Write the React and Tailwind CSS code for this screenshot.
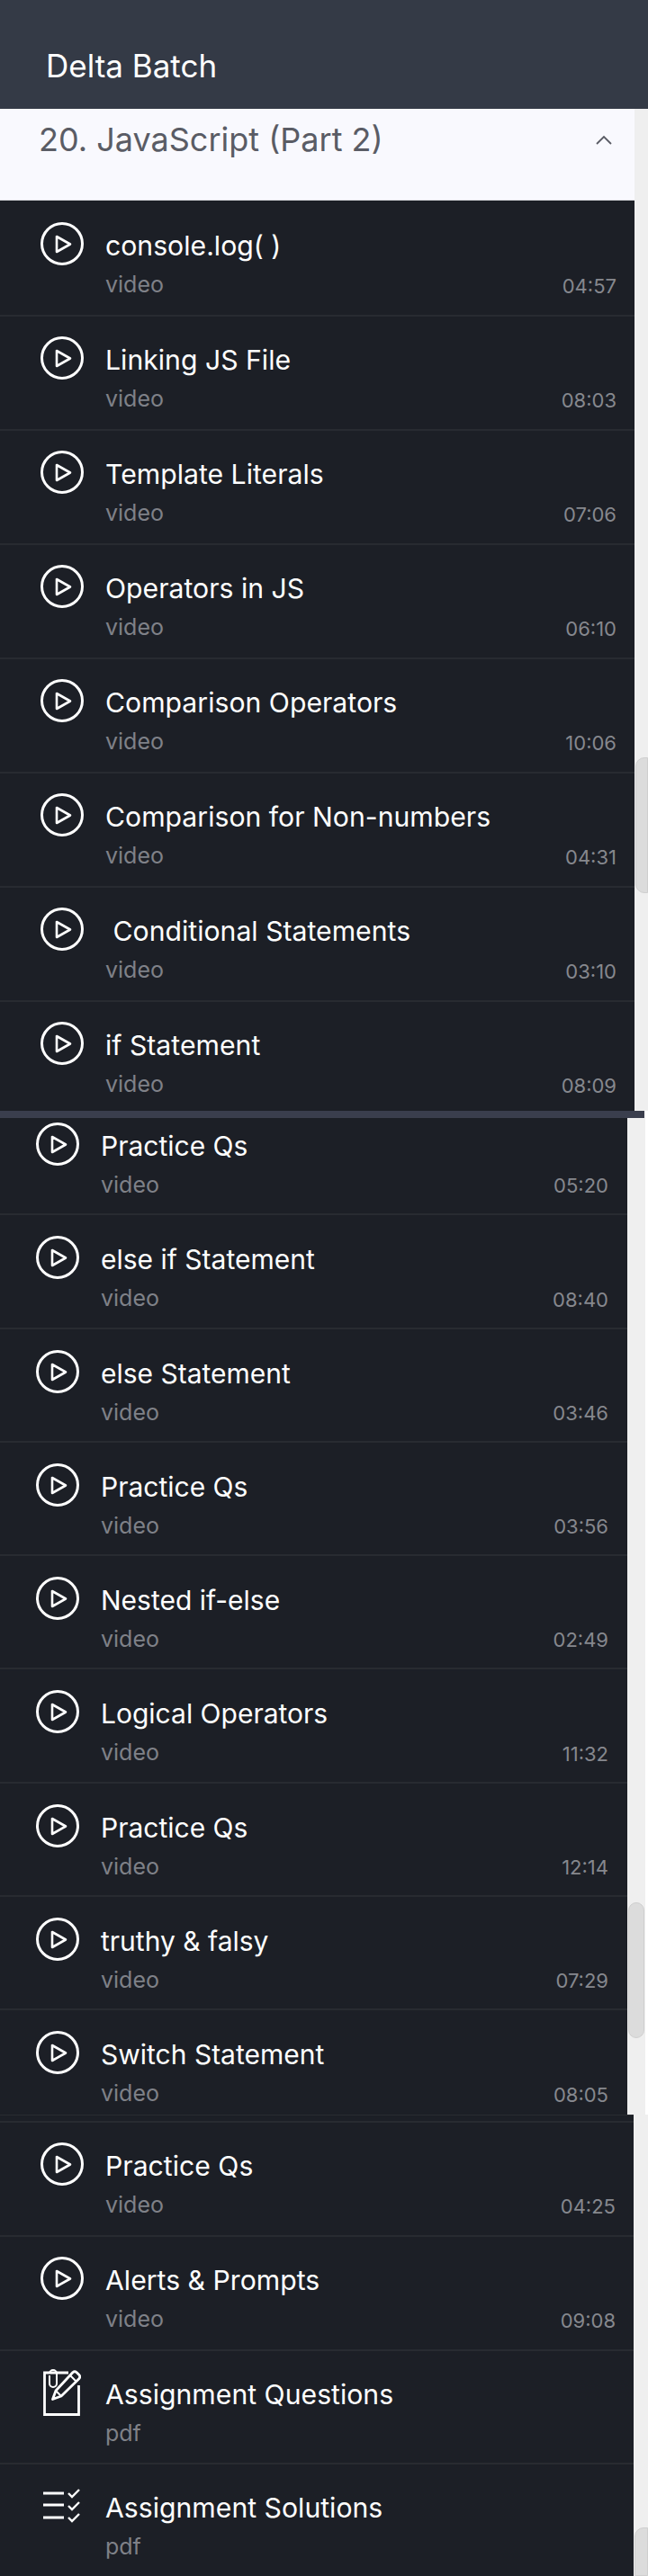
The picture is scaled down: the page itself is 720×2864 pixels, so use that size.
import React from "react";

const firstRows = [
  ["console.log( )", "04:57"],
  ["Linking JS File", "08:03"],
  ["Template Literals", "07:06"],
  ["Operators in JS", "06:10"],
  ["Comparison Operators", "10:06"],
  ["Comparison for Non-numbers", "04:31"],
  [" Conditional Statements", "03:10"],
  ["if Statement", "08:09"],
];

const middleRows = [
  ["Practice Qs", "05:20"],
  ["else if Statement", "08:40"],
  ["else Statement", "03:46"],
  ["Practice Qs", "03:56"],
  ["Nested if-else", "02:49"],
  ["Logical Operators", "11:32"],
  ["Practice Qs", "12:14"],
  ["truthy & falsy", "07:29"],
  ["Switch Statement", "08:05"],
];

const PlayIcon = () => (
  <svg width="48" height="48" viewBox="0 0 48 48" fill="none" stroke="#fff" className="shrink-0">
    <circle cx="24" cy="24" r="22.5" strokeWidth="3" />
    <path d="M18 16v17l15-8.500z" strokeWidth="2.600" strokeLinejoin="round" />
  </svg>
);

const NoteIcon = () => (
  <svg width="42" height="52" viewBox="0 0 42 52" fill="none" stroke="#fff" strokeWidth="2.800" className="shrink-0">
    <path d="M28 4H1.500v46.500h38V18" />
    <path d="M7 7v9a4 4 0 0 0 8 0V5a4 4 0 0 0-8 0" strokeWidth="2" />
    <path d="M10.500 33.500L14 24 33 3.500q2-1.500 4 0l3 3q1.500 2 0 4L20 30z" strokeLinejoin="round" fill="#1c1f26" />
    <path d="M14 24l6 6M30 7l7 7" strokeWidth="2" />
  </svg>
);

const ListCheckIcon = () => (
  <svg width="42" height="40" viewBox="0 0 42 40" fill="none" stroke="#fff" className="shrink-0">
    <path d="M0 6h23M0 19h23M0 33h23" strokeWidth="3" />
    <path d="M28 6l4 4 8-8M28 20l4 4 8-8M28 33l4 4 8-8" strokeWidth="2.400" />
  </svg>
);

const Row = ({ title, time, sub = "video", icon, small, pdf }) => (
  <div className={small ? "flex items-start h-[126.300px] pl-[40px] pr-[21px] border-b-2 border-[#282b31]" : pdf ? "flex items-start h-[126px] pl-[45px] pr-[20px] border-b-2 border-[#282b31]" : "flex items-start h-[127px] pl-[45px] pr-[20px] border-b-2 border-[#282b31]"}>
    <div className={small ? "w-[48px] h-[52px] mt-[21px] flex items-center justify-center shrink-0" : "w-[48px] h-[52px] mt-[20px] flex items-center justify-center shrink-0"}>
      {icon || <PlayIcon />}
    </div>
    <div className={small ? "flex-1 pl-[24px] pt-[30px]" : "flex-1 pl-[24px] pt-[29px]"}>
      <div className={small ? "text-[30px] leading-[38px] text-white whitespace-pre" : "text-[30.200px] leading-[38px] text-white whitespace-pre"}>{title}</div>
      <div className="mt-[8px] text-[25px] leading-[32px] text-[#7f8188]">{sub}</div>
    </div>
    {time && <div className={small ? "self-end mb-[16px] text-[22px] leading-[30px] text-[#86888e]" : "self-end mb-[17px] text-[22px] leading-[30px] text-[#86888e]"}>{time}</div>}
  </div>
);

export default function App() {
  return (
    <div className="w-[720px] h-[2864px] overflow-hidden bg-white font-['Inter',sans-serif]">
      <header className="h-[121px] bg-[#343a46] pl-[51px] pt-[51px]">
        <h1 className="text-[35px] leading-[44px] text-white font-normal">Delta Batch</h1>
      </header>

      <div className="flex h-[1114px]">
        <div className="w-[705px] overflow-hidden">
          <div className="h-[102px] bg-[#f9f9fe] border-b border-[#d9d9de] flex items-start justify-between pl-[43px] pr-[25px] pt-[10px]">
            <span className="text-[36px] leading-[48px] text-[#5a5c65]">20. JavaScript (Part 2)</span>
            <svg width="18" height="11" viewBox="0 0 18 11" fill="none" stroke="#5a5c65" strokeWidth="1.800" className="mt-[19px]">
              <path d="M1 10l8-8 8 8" />
            </svg>
          </div>
          <div className="bg-[#1c1f26] pt-[2px]">
            {firstRows.map(([title, time]) => (
              <Row key={title} title={title} time={time} />
            ))}
          </div>
        </div>
        <div className="flex-1 bg-[#efefef]">
          <div className="mt-[721px] h-[151px] ml-px bg-[#dcdcdc] border border-[#cfcfcf] rounded-l-[10px]" />
        </div>
      </div>

      <div className="h-[8px] w-[716px] bg-[#3a3e4d]" />

      <div className="flex h-[1108px]">
        <div className="w-[697px] overflow-hidden bg-[#1c1f26]">
          <div className="-mt-[18px]">
            {middleRows.map(([title, time]) => (
              <Row key={title + time} title={title} time={time} small />
            ))}
          </div>
        </div>
        <div className="w-[20px] bg-[#efefef]">
          <div className="mt-[872px] h-[151px] mx-px bg-[#dcdcdc] border border-[#cfcfcf] rounded-[10px]" />
        </div>
      </div>

      <div className="flex h-[513px]">
        <div className="w-[704px] overflow-hidden bg-[#1c1f26]">
          <div className="h-[9px] border-t border-b-2 border-[#282b31]" />
          <Row title="Practice Qs" time="04:25" />
          <Row title="Alerts & Prompts" time="09:08" />
          <Row title="Assignment Questions" sub="pdf" icon={<NoteIcon />} pdf />
          <Row title="Assignment Solutions" sub="pdf" icon={<ListCheckIcon />} pdf />
        </div>
        <div className="flex-1 bg-[#efefef]">
          <div className="mt-[459px] h-[54px] ml-px bg-[#dcdcdc] border border-[#cfcfcf] rounded-tl-[10px]" />
        </div>
      </div>
    </div>
  );
}
